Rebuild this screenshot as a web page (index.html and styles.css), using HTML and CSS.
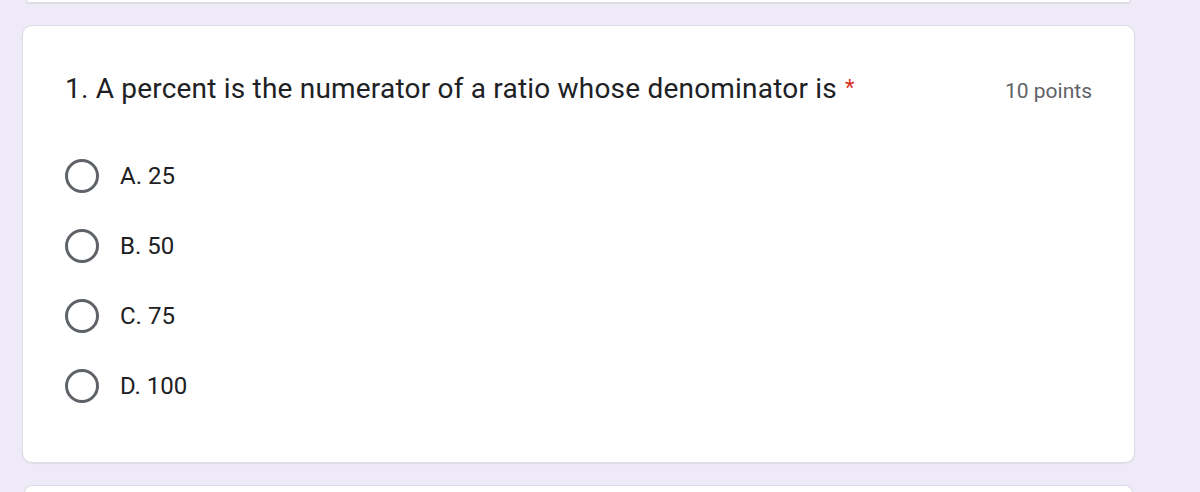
FILE: index.html
```html
<!DOCTYPE html>
<html>
<head>
<meta charset="utf-8">
<link rel="stylesheet" href="styles.css">
</head>
<body>
<div class="page">
  <div class="card card-prev"></div>
  <div class="card card-main">
    <div class="q-head">
      <div class="q-title">1. A percent is the numerator of a ratio whose denominator is<span class="req">*</span></div>
      <div class="q-points">10 points</div>
    </div>
    <div class="options">
      <label class="opt"><span class="radio"></span><span class="opt-text">A. 25</span></label>
      <label class="opt"><span class="radio"></span><span class="opt-text">B. 50</span></label>
      <label class="opt"><span class="radio"></span><span class="opt-text">C. 75</span></label>
      <label class="opt"><span class="radio"></span><span class="opt-text">D. 100</span></label>
    </div>
  </div>
  <div class="card card-next"></div>
</div>
</body>
</html>
```
FILE: styles.css
```css
html, body {
  margin: 0;
  padding: 0;
  background: #eeeaf7;
  height: 100%;
  overflow: hidden;
}
.page {
  width: 1113px;
  margin-left: 22px;
  display: flex;
  flex-direction: column;
  gap: 22px;
  font-family: Roboto, "Liberation Sans", sans-serif;
}
.card {
  background: #fff;
  border: 1px solid #dcdce3;
  border-radius: 10px;
  box-shadow: 0 1px 1px rgba(60, 64, 67, 0.08);
  box-sizing: border-box;
}
.card-prev {
  height: 3px;
  border-top: none;
  border-radius: 0 0 10px 10px;
  margin: 0 4px;
}
.card-main {
  height: 438px;
  padding: 48px 42px 0 42px;
}
.card-next {
  height: 8px;
  margin: 0 2px;
  border-bottom: none;
  border-radius: 10px 10px 0 0;
  box-shadow: none;
}
.q-head {
  display: flex;
  justify-content: space-between;
  align-items: center;
  height: 32px;
}
.q-title {
  font-size: 28px;
  line-height: 32px;
  color: #202124;
  letter-spacing: 0.2px;
}
.req {
  color: #d93025;
  margin-left: 8px;
  font-size: 22px;
  position: relative;
  top: -3px;
}
.q-points {
  font-size: 21px;
  color: #5f6368;
  line-height: 32px;
  margin-top: 2px;
}
.options {
  margin-top: 35px;
  display: flex;
  flex-direction: column;
}
.opt {
  display: flex;
  align-items: center;
  height: 70px;
  gap: 21px;
}
.radio {
  width: 34px;
  height: 34px;
  border: 3px solid #5f6368;
  border-radius: 50%;
  box-sizing: border-box;
  flex: none;
}
.opt-text {
  font-size: 24px;
  color: #202124;
}
```
